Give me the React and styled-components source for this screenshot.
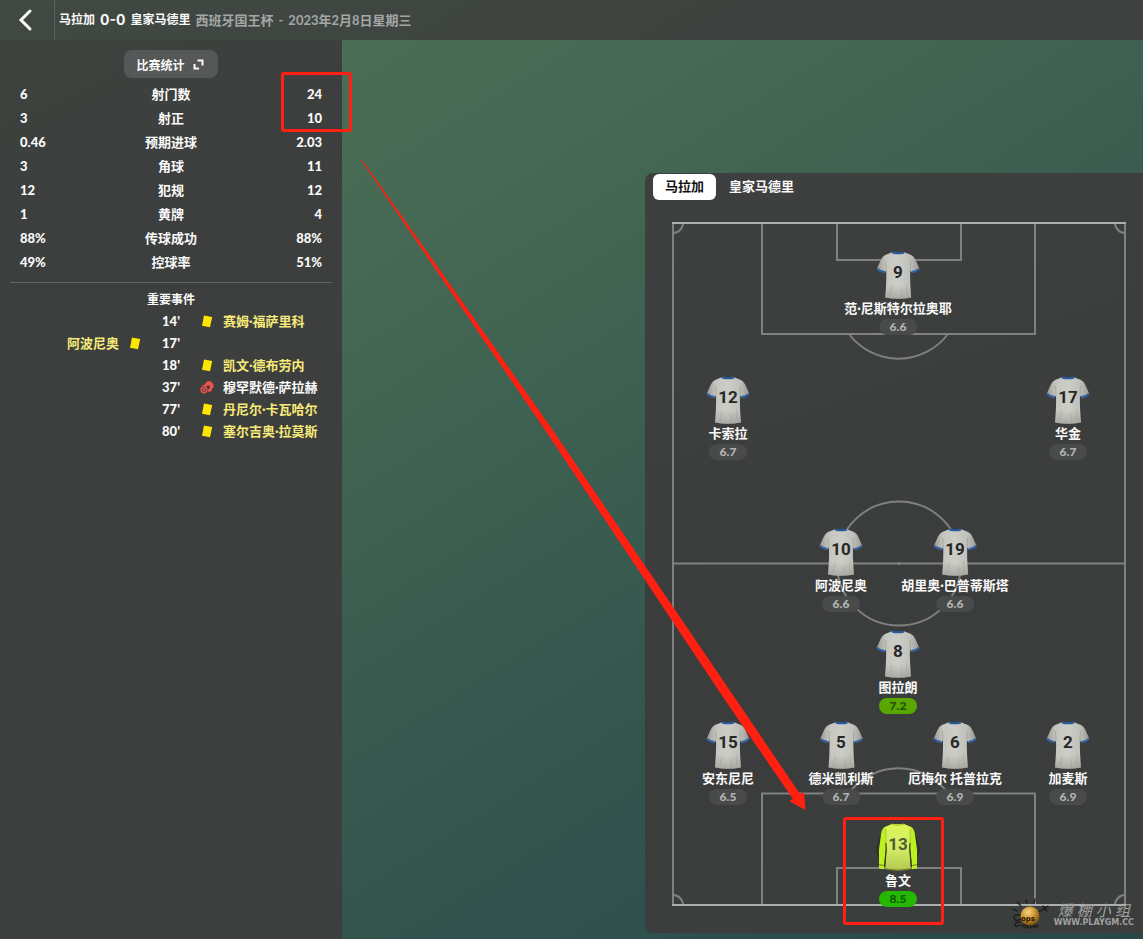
import React, { useState } from 'react';
import styled, { createGlobalStyle } from 'styled-components';

const palette = {
  text: '#fafafa',
  muted: '#a3a7a5',
  yellow: '#f6ea78',
  card: '#ffe600',
  injury: '#f2524f',
  red: '#ff2012',
  line: '#7f8180',
};

const GlobalStyle = createGlobalStyle`
  * {
    box-sizing: border-box;
  }
  body {
    margin: 0;
    font-family: Lato, 'Noto Sans CJK SC', sans-serif;
    font-size: 13px;
    font-weight: 700;
    color: ${palette.text};
  }
  button {
    font: inherit;
    color: inherit;
    border: 0;
    cursor: pointer;
  }
`;

const Page = styled.div`
  position: relative;
  display: flex;
  flex-direction: column;
  min-height: 100vh;
  overflow: hidden;
  background: linear-gradient(148deg, #4e735a 0%, #446853 32%, #36584f 62%, #284749 100%);
`;

const Header = styled.header`
  display: flex;
  align-items: center;
  height: 40px;
  background: linear-gradient(150deg, #414943, #3e4340 60%, #3d413f);
`;

const BackButton = styled.button`
  display: flex;
  align-items: center;
  justify-content: center;
  width: 55px;
  height: 100%;
  padding: 0 4px 0 0;
  background: none;
  border-right: 1px solid #5b625e;
`;

const Fixture = styled.h1`
  display: flex;
  align-items: center;
  gap: 5px;
  margin: 0 5px 0 4px;
  font-size: 12px;
  line-height: 42px;
`;

const Score = styled.span`
  font-family: Inter, sans-serif;
  font-size: 14px;
`;

const Competition = styled.div`
  display: flex;
  gap: 5px;
  line-height: 38px;
  color: ${palette.muted};
`;

const Body = styled.div`
  display: flex;
  flex: 1;
`;

const Sidebar = styled.aside`
  position: relative;
  flex: 0 1 342px;
  padding: 10px;
  background: linear-gradient(155deg, #3d433e, #3d3f3e 20%, #3d3f3e);
`;

const StatsButton = styled.button`
  display: flex;
  align-items: center;
  gap: 8px;
  height: 28px;
  margin: 0 auto 4px;
  padding: 0 14px 0 12px;
  border-radius: 8px;
  background: #555856;
  font-size: 12px;
`;

const StatsTable = styled.table`
  width: 100%;
  border-collapse: collapse;
  table-layout: fixed;

  tr {
    height: 24px;
  }
  th,
  td {
    padding: 0 10px;
    line-height: 24px;
    text-align: left;
  }
  th {
    padding: 0;
    text-align: center;
  }
  td {
    font-weight: 900;
  }
  td:last-child {
    text-align: right;
  }
`;

const Divider = styled.hr`
  height: 1px;
  margin: 8px 0 6px;
  border: 0;
  background: #636564;
`;

const EventsTitle = styled.h2`
  margin: 0;
  font-size: 12px;
  line-height: 21px;
  text-align: center;
`;

const EventList = styled.ul`
  margin: 0;
  padding: 0;
  list-style: none;
`;

const EventRow = styled.li`
  display: grid;
  grid-template-columns: 1fr 58px 1fr;
  line-height: 22px;
`;

const EventSide = styled.div`
  display: flex;
  align-items: center;
  justify-content: ${({ $home }) => ($home ? 'flex-end' : 'flex-start')};
  gap: 9px;
  white-space: nowrap;
  color: ${({ $injury }) => ($injury ? palette.text : palette.yellow)};
`;

const Minute = styled.time`
  font-weight: 900;
  text-align: center;
`;

const Main = styled.main`
  display: flex;
  flex: 1;
  justify-content: flex-end;
  align-items: flex-start;
  padding: 133px 0 6px;
`;

const LineupPanel = styled.section`
  position: relative;
  flex: 0 1 498px;
  padding: 1px 17px 27px 27px;
  border-radius: 8px 0 0 8px;
  background: linear-gradient(160deg, #3e403f, #3b3c3c 60%, #3c3e3d);
`;

const Tabs = styled.div`
  display: flex;
  gap: 1px;
  margin: 0 0 22px -19px;
`;

const Tab = styled.button`
  height: 26px;
  padding: 0 12px 3px;
  border-radius: 6px;
  background: ${({ $active }) => ($active ? '#fff' : 'transparent')};
  color: ${({ $active }) => ($active ? '#111' : palette.text)};
`;

const Pitch = styled.div`
  position: relative;
  aspect-ratio: 454 / 684;

  > svg {
    display: block;
    width: 100%;
    height: 100%;
  }
`;

const Player = styled.div`
  position: absolute;
  left: ${({ $x }) => ($x / 454) * 100}%;
  top: ${({ $y }) => ($y / 684) * 100}%;
  display: flex;
  flex-direction: column;
  align-items: center;
  transform: translateX(-50%);
  white-space: nowrap;
`;

const Kit = styled.div`
  position: relative;
  width: 44px;
  height: 48px;
`;

const ShirtNumber = styled.span`
  position: absolute;
  inset: 10px 0 auto;
  font-family: Roboto, sans-serif;
  font-size: 17px;
  line-height: 23px;
  text-align: center;
  color: ${({ $keeper }) => ($keeper ? '#4f5f2c' : '#272727')};
`;

const PlayerName = styled.span`
  margin-bottom: 2px;
  line-height: 18px;
`;

const ratingColors = {
  plain: ['#494a4a', '#b4b4b4'],
  good: ['#58a800', '#285200'],
  great: ['#25b800', '#0f5c00'],
};

const Rating = styled.span`
  width: 38px;
  border-radius: 8px;
  font-size: 12px;
  font-weight: 900;
  line-height: 16px;
  text-align: center;
  background: ${({ $level }) => ratingColors[$level][0]};
  color: ${({ $level }) => ratingColors[$level][1]};
`;

const Highlight = styled.div`
  position: absolute;
  border: 3px solid ${palette.red};
  border-radius: 3px;
  pointer-events: none;
`;

const StatHighlight = styled(Highlight)`
  top: 32px;
  right: -10px;
  width: 71px;
  height: 60px;
`;

const KeeperHighlight = styled(Highlight)`
  inset: -6px auto -18px 50%;
  width: 101px;
  margin-left: -55px;
`;

const Arrow = styled.svg`
  position: absolute;
  top: 0;
  left: 0;
  pointer-events: none;
`;

const Watermark = styled.div`
  position: absolute;
  right: 9px;
  bottom: 3px;
  display: flex;
  align-items: center;
  gap: 4px;
  color: #a0a1a1;
`;

const WatermarkText = styled.div`
  text-align: center;
`;

const GroupName = styled.div`
  display: flex;
  justify-content: space-between;
  padding: 0 4px;
  font-family: 'Noto Sans CJK SC', sans-serif;
  font-size: 15px;
  font-style: italic;
  font-weight: 400;
  line-height: 17px;
`;

const SiteUrl = styled.div`
  font-family: 'DejaVu Sans', sans-serif;
  font-size: 8px;
  line-height: 10px;
`;

const stats = [
  ['6', '射门数', '24'],
  ['3', '射正', '10'],
  ['0.46', '预期进球', '2.03'],
  ['3', '角球', '11'],
  ['12', '犯规', '12'],
  ['1', '黄牌', '4'],
  ['88%', '传球成功', '88%'],
  ['49%', '控球率', '51%'],
];

const events = [
  { minute: 14, name: '赛姆·福萨里科' },
  { minute: 17, name: '阿波尼奥', home: true },
  { minute: 18, name: '凯文·德布劳内' },
  { minute: 37, name: '穆罕默德·萨拉赫', injury: true },
  { minute: 77, name: '丹尼尔·卡瓦哈尔' },
  { minute: 80, name: '塞尔吉奥·拉莫斯' },
];

const players = [
  { number: 9, name: '范·尼斯特尔拉奥耶', rating: '6.6', x: 226, y: 29 },
  { number: 12, name: '卡索拉', rating: '6.7', x: 56, y: 154 },
  { number: 17, name: '华金', rating: '6.7', x: 396, y: 154 },
  { number: 10, name: '阿波尼奥', rating: '6.6', x: 169, y: 306 },
  { number: 19, name: '胡里奥·巴普蒂斯塔', rating: '6.6', x: 283, y: 306 },
  { number: 8, name: '图拉朗', rating: '7.2', level: 'good', x: 226, y: 408 },
  { number: 15, name: '安东尼尼', rating: '6.5', x: 56, y: 499 },
  { number: 5, name: '德米凯利斯', rating: '6.7', x: 169, y: 499 },
  { number: 6, name: '厄梅尔 托普拉克', rating: '6.9', x: 283, y: 499 },
  { number: 2, name: '加麦斯', rating: '6.9', x: 396, y: 499 },
  { number: 13, name: '鲁文', rating: '8.5', level: 'great', keeper: true, x: 226, y: 601 },
];

const CardIcon = () => (
  <svg width="14" height="14" viewBox="0 0 14 14" aria-hidden="true">
    <path d="M4 1.6 12.2 3 10 13.2 2 11.8Z" fill={palette.card} />
  </svg>
);

const InjuryIcon = () => (
  <svg width="14" height="14" viewBox="0 0 14 14" aria-hidden="true">
    <path
      d="M1.6 5.4 5 4.6 6.4 1.8 10.2 1 13.2 4 13.8 7 11.6 9 11.8 10.6 8.8 12.4 7.8 9.8 10 8 9.6 5.8 7.8 5.4 6 6.6 3.4 6.4Z"
      fill={palette.injury}
    />
    <circle cx="4" cy="9.8" r="3" fill="#3d3f3e" stroke={palette.injury} strokeWidth="1.3" />
    <path d="m2.4 8.2 3.2 3.2M5.6 8.200 2.400 11.400" stroke={palette.injury} strokeWidth="1.1" />
  </svg>
);

const Shirt = () => (
  <svg width="44" height="48" viewBox="0 0 44 48" aria-hidden="true">
    <defs>
      <linearGradient id="shirt" x1="0" x2="1">
        <stop offset="0" stopColor="#9a9a94" />
        <stop offset=".22" stopColor="#c6c6c0" />
        <stop offset=".5" stopColor="#cdcdc7" />
        <stop offset=".78" stopColor="#c1c1bb" />
        <stop offset="1" stopColor="#989892" />
      </linearGradient>
      <linearGradient id="shirtFade" x1="0" x2="0" y1="0" y2="1">
        <stop offset=".5" stopColor="#888882" stopOpacity="0" />
        <stop offset="1" stopColor="#777771" stopOpacity=".4" />
      </linearGradient>
    </defs>
    <path
      d="M16 1.2Q22 3 28 1.2L35 4Q38 5.5 39.4 9L43.4 18Q40 21.5 35.6 21.6L34 19.6Q33.6 30 35 46.4Q22 49 9 46.4Q10.4 30 10 19.6L8.4 21.6Q4 21.5.6 18L4.6 9Q6 5.5 9 4Z"
      fill="url(#shirt)"
    />
    <path d="M10 19.6Q10.4 30 9 46.4Q22 49 35 46.4Q33.6 30 34 19.6Z" fill="url(#shirtFade)" />
    <path d="M10 20 9.6 10M34 20l.4-10" stroke="#8c8c86" strokeWidth=".8" opacity=".6" />
    <path d="M16 35q-1 6-2.6 10M25 38q1 4 .6 8M31 33q-1 5 0 11" fill="none" stroke="#8f8f88" strokeWidth=".8" opacity=".4" />
    <path d="M16 1.5Q22 3.2 28 1.5" fill="none" stroke="#27599d" strokeWidth="2" />
    <path d="M1 17.6Q4.2 20.8 8.6 21M43 17.6Q39.8 20.8 35.4 21" fill="none" stroke="#2e62a8" strokeWidth="2" />
  </svg>
);

const KeeperShirt = () => (
  <svg width="44" height="48" viewBox="0 0 44 48" aria-hidden="true">
    <defs>
      <linearGradient id="keeper" x1="0" x2="0" y1="0" y2="1">
        <stop offset="0" stopColor="#dcf556" />
        <stop offset=".5" stopColor="#d3ec68" />
        <stop offset="1" stopColor="#b4c94e" />
      </linearGradient>
    </defs>
    <path d="M5 12 .8 26 4 38M39 12l4.2 14L40 38" fill="none" stroke="#20221f" strokeWidth=".8" />
    <path
      d="M16 1 8.6 4Q5.4 6 4.8 13L3 27V45.4L8 46.2 9.2 30 12 16H32L34.8 30 36 46.2 41 45.4V27L39.2 13Q38.6 6 35.4 4L28 1Z"
      fill="#bdf01f"
    />
    <path d="M16 1.2Q22 2.6 28 1.2L34.4 4 33.6 24 34.8 46Q22 49 9.2 46L10.4 24 9.6 4Z" fill="url(#keeper)" />
    <path d="M10 20 10.2 27 8.6 44M34 20 33.8 27 35.4 44" fill="none" stroke="#37420f" strokeWidth="1.2" />
    <path d="M9.8 6 10 20M34.2 6 34 20" stroke="#a5bd38" strokeWidth=".8" />
    <path d="M3.2 41.6 7.8 42.6M40.8 41.6 36.2 42.6M9.4 45.8Q22 48.6 34.6 45.8" fill="none" stroke="#60731a" strokeWidth=".9" />
    <path d="M16 1.2Q22 3 28 1.2" fill="none" stroke="#b0c931" strokeWidth="1.4" />
  </svg>
);

const PitchLines = () => (
  <svg viewBox="0 0 454 684" fill="none" stroke={palette.line} strokeWidth="2" aria-hidden="true">
    <path d="M1 1V683M453 1V683M1 341.5H453" />
    <path d="M90 1V112H363V1M165 1V38H289V1" />
    <path d="M90 683V571.5H363V683M165 683V646H289V683" />
    <path d="M177 112A62 62 0 0 0 276 112M177 571A62 62 0 0 1 276 571" />
    <circle cx="227" cy="341.5" r="62" />
    <circle cx="227" cy="341.5" r=".6" />
    <path d="M11 1A10 10 0 0 1 1 11M443 1A10 10 0 0 0 453 11M11 683A10 10 0 0 0 1 673M443 683A10 10 0 0 1 453 673" />
    <path d="M0 1H454M0 683H454" stroke="#adafae" />
  </svg>
);

const SunLogo = () => (
  <svg width="38" height="32" viewBox="0 0 38 32" aria-hidden="true">
    <defs>
      <radialGradient id="sun" cx=".4" cy=".3" r=".7">
        <stop offset="0" stopColor="#f6d384" />
        <stop offset=".5" stopColor="#d19a35" />
        <stop offset="1" stopColor="#7a4d10" />
      </radialGradient>
    </defs>
    <g fill="none" stroke="#191b1a" strokeWidth="1.3" strokeLinecap="round">
      <path d="m9 8-4-4M15 5l-1-3M22 5l1-4M5 13l-4-2" />
      <path d="m27 14 6-4M31 8l4 5M33 10l3-2M8 17q-7-1-6 3t7 1M8 24q-5 0-5 3t5 0" />
    </g>
    <ellipse cx="18" cy="28" rx="9" ry="2.4" fill="#252726" />
    <circle cx="18" cy="18" r="9.5" fill="url(#sun)" />
    <text x="9" y="23" fontFamily="DejaVu Sans, sans-serif" fontSize="7" fontWeight="700" fill="#1d1708">
      ops
    </text>
  </svg>
);

const EventItem = ({ minute, name, home, injury }) => {
  const icon = injury ? <InjuryIcon /> : <CardIcon />;
  return (
    <EventRow>
      <EventSide $home>
        {home && (
          <>
            {name}
            {icon}
          </>
        )}
      </EventSide>
      <Minute>{minute}'</Minute>
      <EventSide $injury={injury}>
        {!home && (
          <>
            {icon}
            {name}
          </>
        )}
      </EventSide>
    </EventRow>
  );
};

const PlayerItem = ({ number, name, rating, level = 'plain', keeper, x, y }) => (
  <Player $x={x} $y={y}>
    <Kit>
      {keeper ? <KeeperShirt /> : <Shirt />}
      <ShirtNumber $keeper={keeper}>{number}</ShirtNumber>
    </Kit>
    <PlayerName>{name}</PlayerName>
    <Rating $level={level}>{rating}</Rating>
    {keeper && <KeeperHighlight />}
  </Player>
);

const App = () => {
  const [team, setTeam] = useState('马拉加');

  return (
    <Page>
      <GlobalStyle />
      <Header>
        <BackButton aria-label="返回">
          <svg width="16" height="24" viewBox="0 0 16 24" aria-hidden="true">
            <path d="M13 3 4 12l9 9" fill="none" stroke="#fafafa" strokeWidth="3" strokeLinecap="round" />
          </svg>
        </BackButton>
        <Fixture>
          马拉加 <Score>0-0</Score> 皇家马德里
        </Fixture>
        <Competition>
          <span>西班牙国王杯</span>
          <span>-</span>
          <time dateTime="2023-02-08">2023年2月8日星期三</time>
        </Competition>
      </Header>
      <Body>
        <Sidebar>
          <StatsButton>
            比赛统计
            <svg width="11" height="11" viewBox="0 0 11 11" aria-hidden="true">
              <path d="M4.500 1.500H9.500V6.500M1.500 5V9.500H6" fill="none" stroke="#fafafa" strokeWidth="2" />
            </svg>
          </StatsButton>
          <StatsTable>
            <tbody>
              {stats.map(([home, label, away]) => (
                <tr key={label}>
                  <td>{home}</td>
                  <th scope="row">{label}</th>
                  <td>{away}</td>
                </tr>
              ))}
            </tbody>
          </StatsTable>
          <Divider />
          <EventsTitle>重要事件</EventsTitle>
          <EventList>
            {events.map((event) => (
              <EventItem key={event.minute} {...event} />
            ))}
          </EventList>
          <StatHighlight />
        </Sidebar>
        <Main>
          <LineupPanel>
            <Tabs role="tablist">
              {['马拉加', '皇家马德里'].map((name) => (
                <Tab
                  key={name}
                  role="tab"
                  aria-selected={team === name}
                  $active={team === name}
                  onClick={() => setTeam(name)}
                >
                  {name}
                </Tab>
              ))}
            </Tabs>
            <Pitch>
              <PitchLines />
              {players.map((player) => (
                <PlayerItem key={player.number} {...player} />
              ))}
            </Pitch>
            <Watermark>
              <SunLogo />
              <WatermarkText>
                <GroupName>
                  <span>爆</span>
                  <span>棚</span>
                  <span>小</span>
                  <span>组</span>
                </GroupName>
                <SiteUrl>WWW.PLAYGM.CC</SiteUrl>
              </WatermarkText>
            </Watermark>
          </LineupPanel>
        </Main>
      </Body>
      <Arrow width="820" height="820" viewBox="0 0 820 820" aria-hidden="true">
        <path d="M361 160 363 161 550 426 735 698 800 794 804 792 805.5 810 789 801 793 799 725 700 545 430Z" fill={palette.red} />
      </Arrow>
    </Page>
  );
};

export default App;
